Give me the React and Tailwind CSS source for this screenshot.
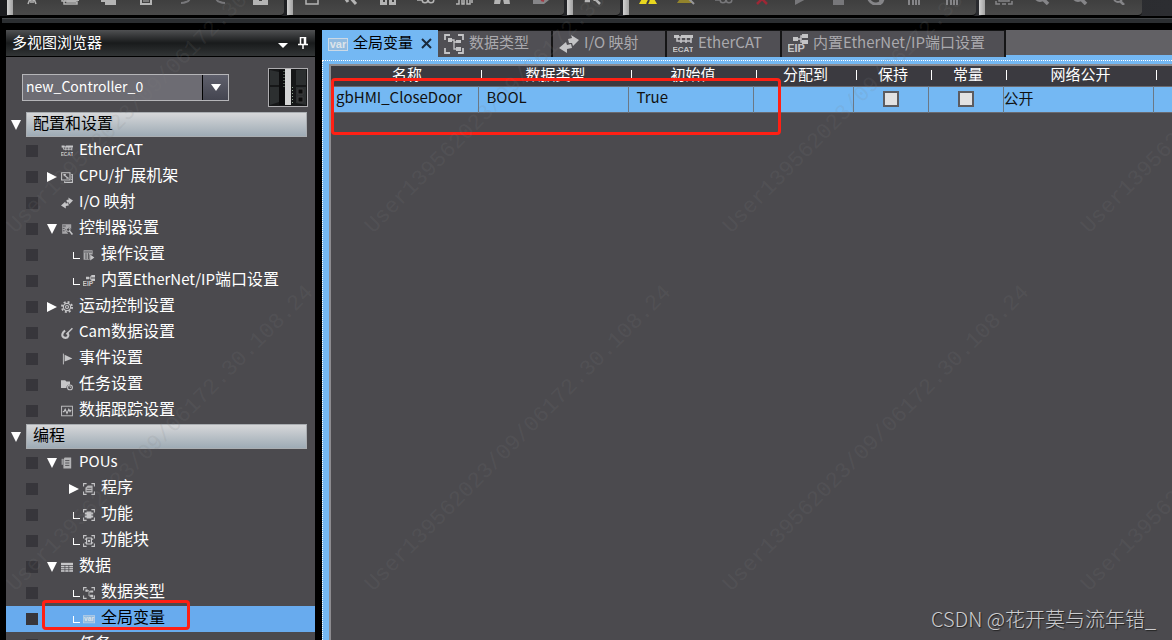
import React, { useState } from "react";

const TOOL_GROUPS = [
  [
    ["剪切", "cut"],
    ["复制", "copy"],
    ["粘贴", "paste"],
    ["删除", "trash"],
    ["撤销", "undo", "text-[#77777a]"],
    ["恢复", "redo", "text-[#77777a]"],
    ["新建", "box"],
  ],
  [
    ["窗口", "frame"],
    ["编译", "tool"],
    ["查找", "panes"],
    ["监视", "glasses"],
    ["波形", "wave"],
    ["交叉引用", "binoculars"],
    ["编辑", "note", "text-[#858588]"],
  ],
  [["设置", "wrench"]],
  [
    ["在线", "warning", "text-[#e9d71f]"],
    ["离线", "warningOff", "text-[#92832c]"],
    ["同步", "glasses", "text-[#77777a]"],
    ["停止监视", "cross", "text-[#9c2735]"],
    ["运行", "play", "text-[#77777a]"],
    ["停止", "stop", "text-[#77777a]"],
    ["复位", "reset", "text-[#858588]"],
    ["状态", "bars", "text-[#858588]"],
    ["统计", "bars", "text-[#858588]"],
  ],
  [
    ["适合窗口", "fit", "text-[#858588]"],
    ["放大", "zoom", "text-[#858588]"],
    ["缩小", "zoom", "text-[#858588]"],
    ["100%", "zoomSmall", "text-[#858588]"],
  ],
];

const TABS = [
  { label: "全局变量", icon: "var", width: "w-[116px]" },
  { label: "数据类型", icon: "types", width: "w-[115px]" },
  { label: "I/O 映射", icon: "io", width: "w-[114px]" },
  { label: "EtherCAT", icon: "ecat", width: "w-[115px]" },
  { label: "内置EtherNet/IP端口设置", icon: "eip", width: "w-[224px]" },
];

const SECTIONS = [
  {
    title: "配置和设置",
    items: [
      { label: "EtherCAT", icon: "ecat" },
      { label: "CPU/扩展机架", icon: "cpu", state: "closed" },
      { label: "I/O 映射", icon: "io" },
      { label: "控制器设置", icon: "controller", state: "open" },
      { label: "操作设置", icon: "operation", child: true },
      { label: "内置EtherNet/IP端口设置", icon: "eip", child: true },
      { label: "运动控制设置", icon: "gear", state: "closed" },
      { label: "Cam数据设置", icon: "cam" },
      { label: "事件设置", icon: "flag" },
      { label: "任务设置", icon: "task" },
      { label: "数据跟踪设置", icon: "trace" },
    ],
  },
  {
    title: "编程",
    items: [
      { label: "POUs", icon: "pou", state: "open" },
      { label: "程序", icon: "program", child: true, state: "closed" },
      { label: "功能", icon: "func", child: true },
      { label: "功能块", icon: "block", child: true },
      { label: "数据", icon: "table", state: "open" },
      { label: "数据类型", icon: "types", child: true },
      { label: "全局变量", icon: "var", child: true, marked: true },
      { label: "任务", icon: "task", state: "closed" },
    ],
  },
];

const COLUMNS = [
  { label: "名称", width: "w-[147px]" },
  { label: "数据类型", width: "w-[150px]" },
  { label: "初始值", width: "w-[125px]" },
  { label: "分配到", width: "w-[100px]" },
  { label: "保持", width: "w-[75px]" },
  { label: "常量", width: "w-[75px]" },
  { label: "网络公开", width: "w-[150px]" },
];

const line = { fill: "none", stroke: "currentColor", strokeWidth: 2 };

const TOOL_ICONS = {
  cut: (
    <>
      <path d="M5 0l6 13M13 0L7 13" {...line} />
      <path d="M7 12l-2 5M11 12l2 5M8 13v3M10 13v3" {...line} strokeWidth="1.500" />
    </>
  ),
  copy: (
    <>
      <path d="M7 1h10v12H7z" {...line} />
      <path d="M1 12v2h2v3h13v-2H6v-3M4 12v2h11" {...line} strokeWidth="1.500" />
    </>
  ),
  paste: <path d="M2 2h10v6h5v10H6v-3H2v-2h4v-2H2z" fill="currentColor" />,
  trash: (
    <>
      <path d="M2 3h14M7 1h4M4 6h10v11H4z" {...line} />
      <path d="M7 8v7M9 8v7M11 8v7" {...line} strokeWidth="1" />
    </>
  ),
  undo: <path d="M4 5h6c7 0 6 9 1 10-2 1-3 1-5 1M8 1L4 5l4 4" {...line} />,
  redo: <path d="M14 5H8C1 5 2 14 7 15c2 1 3 1 5 1M10 1l4 4-4 4" {...line} />,
  box: <path d="M2 4h15v14H2zM8 12v2h3v-2z" fill="currentColor" fillRule="evenodd" />,
  frame: <path d="M3 4h12v13H3z" {...line} strokeWidth="1.500" />,
  tool: <path d="M2 8l5 7M7 8l8 9" {...line} strokeWidth="3" />,
  panes: <path d="M1 4h7v14H1zM10 4h7v14h-7zM4 13h2v2H4zM13 13h2v2h-2z" fill="currentColor" fillRule="evenodd" />,
  glasses: (
    <>
      <circle cx="8" cy="13" r="2.800" {...line} strokeWidth="1.500" />
      <circle cx="14" cy="13" r="2.800" {...line} strokeWidth="1.500" />
      <path d="M0 13h5M4 13l3-8" {...line} strokeWidth="1.500" />
    </>
  ),
  wave: <path d="M1 17h3V9h3v8h2V9h3v8h3V9h2v7" {...line} strokeWidth="1.500" />,
  binoculars: <path d="M3 3h5v7h2V3h5l2 14h-6l-1-5H8l-1 5H1z" fill="currentColor" />,
  note: (
    <>
      <path d="M2 4h12v9h4l-5 4H2z" fill="currentColor" />
      <path d="M10 13l3 1" stroke="#a03a44" strokeWidth="2" />
    </>
  ),
  wrench: <path d="M4 6l-1 8h4M8 8l9 9M10 13l3-3" {...line} strokeWidth="2.500" />,
  warning: (
    <>
      <path d="M9 1l9 16H0z" fill="currentColor" />
      <path d="M9 6v6M10 13l-2 4" stroke="#3c3c3c" strokeWidth="2" />
    </>
  ),
  warningOff: (
    <>
      <path d="M9 3l7 13H0z" fill="currentColor" />
      <path d="M8 8l9 9" stroke="#97979a" strokeWidth="2" />
    </>
  ),
  cross: <path d="M3 5l6 7-5 5M15 5l-6 7 5 5" {...line} strokeWidth="2.500" />,
  play: <path d="M4 5l13 6-13 7z" fill="currentColor" />,
  stop: <path d="M4 6h11v12H4z" fill="currentColor" />,
  reset: <path d="M9 3a7 7 0 1 0 6 10M8 17a6 6 0 0 0 8-5l-4 1" {...line} strokeWidth="3" />,
  bars: <path d="M4 6v12M8 10v8M11 10v8M14 6v12" {...line} />,
  fit: <path d="M1 14v3h4M17 14v3h-4M4 6h10v8H4zM7 17h4" {...line} strokeWidth="1.500" />,
  zoom: (
    <>
      <circle cx="7" cy="9" r="5" {...line} />
      <path d="M10 12l5 5" {...line} strokeWidth="3.500" />
    </>
  ),
  zoomSmall: (
    <>
      <circle cx="9" cy="11" r="4" {...line} />
      <path d="M11 14l4 4" {...line} strokeWidth="2.500" />
    </>
  ),
};

const corners = "M1 6V1h5M14 1h5v5M19 14v5h-5M6 19H1v-5";

const GLYPHS = {
  var: (
    <>
      <rect x="0.5" y="4.5" width="19" height="12" fill="#92bbe0" stroke="#cbd9e6" />
      <text x="10" y="14" textAnchor="middle" fontSize="11" fontWeight="bold" fill="#dde4ea" fontFamily="Liberation Sans, sans-serif">
        var
      </text>
    </>
  ),
  types: (
    <>
      <path d={corners} fill="none" stroke="currentColor" strokeWidth="1.800" />
      <path d="M4 4h4v4H4zM12 6h5v3h-5zM12 13h5v4h-5z" fill="currentColor" />
      <path d="M8 6h2v9h3M10 8h3" fill="none" stroke="currentColor" strokeWidth="1.300" />
    </>
  ),
  io: (
    <path
      d="M12 1l8 5-6 6-1-3h-3l-1-4 4-1zM7 8l1 3 4-1 1 4-5 1v4l-8-5z"
      fill="currentColor"
    />
  ),
  ecat: (
    <>
      <path d="M1 1h5v3H1zM8 1h12v3H8z" fill="currentColor" />
      <path d="M2 3h15M4 4v3h14V4M8 3v6M13 3v6M18 6v3" fill="none" stroke="currentColor" strokeWidth="1.500" />
      <text x="10" y="18" textAnchor="middle" fontSize="8" fontWeight="bold" fill="currentColor" fontFamily="Liberation Sans, sans-serif">
        ECAT
      </text>
    </>
  ),
  eip: (
    <>
      <path d="M5 3h5v4H5zM14 0h6v4h-6zM14 6h6v4h-6z" fill="currentColor" />
      <path d="M10 5h3M15 2h-2v6h2" fill="none" stroke="currentColor" strokeWidth="1.500" />
      <text x="8" y="18" textAnchor="middle" fontSize="11" fontWeight="bold" fill="currentColor" fontFamily="Liberation Sans, sans-serif">
        EIP
      </text>
    </>
  ),
  cpu: (
    <>
      <path d="M1 3h14v12H1zM17 6h2v13H6v-2M17 10h2M17 14h2" fill="none" stroke="currentColor" strokeWidth="1.800" />
      <path d="M4 6l8 6M4 6h4M9 12h4" fill="none" stroke="currentColor" strokeWidth="2" />
    </>
  ),
  controller: (
    <>
      <path d="M2 2h15v8l-4-3-6 4 5 7H2z" fill="currentColor" opacity=".75" />
      <path d="M3 5h5M3 9h3M3 13h3" stroke="#4b4a4e" strokeWidth="1.500" />
      <circle cx="12" cy="11" r="3" fill="none" stroke="currentColor" strokeWidth="1.500" />
      <path d="M14 13l5 6" stroke="currentColor" strokeWidth="2.500" />
    </>
  ),
  operation: (
    <>
      <path d="M1 2h15v7h-5v9H1z" fill="currentColor" opacity=".8" />
      <path d="M2 5h13M5 7v10M9 7v10" stroke="#4b4a4e" strokeWidth="1.500" />
      <path d="M12 9l7 5-7 5z" fill="currentColor" />
    </>
  ),
  gear: (
    <>
      <circle cx="10" cy="10" r="8.500" fill="none" stroke="currentColor" strokeWidth="3" strokeDasharray="3.300 3.376" />
      <circle cx="10" cy="10" r="6" fill="none" stroke="currentColor" strokeWidth="2" />
      <circle cx="10" cy="10" r="2.500" fill="none" stroke="currentColor" strokeWidth="2" />
    </>
  ),
  cam: (
    <>
      <path d="M9 12L19 2" stroke="currentColor" strokeWidth="2.500" />
      <path d="M7 6c-4 2-6 7-4 10s8 3 9-1c.5-2-.5-4-2-4.500" fill="none" stroke="currentColor" strokeWidth="3.500" />
    </>
  ),
  flag: (
    <>
      <path d="M4 1v18" stroke="currentColor" strokeWidth="1.500" />
      <path d="M6 3l13 6-13 5z" fill="currentColor" />
    </>
  ),
  task: (
    <>
      <path d="M0 2h7l2 2h6v5a6 6 0 0 0-6 6H0z" fill="currentColor" />
      <circle cx="15" cy="14" r="4" fill="none" stroke="currentColor" strokeWidth="1.800" />
      <path d="M15 11.500V14h2" fill="none" stroke="currentColor" strokeWidth="1.300" />
    </>
  ),
  trace: (
    <>
      <rect x="1" y="2" width="18" height="16" fill="none" stroke="currentColor" strokeWidth="1.500" />
      <path d="M3 11h2l2-4 3 7 3-7 2 4 2-3" fill="none" stroke="currentColor" strokeWidth="1.800" />
    </>
  ),
  pou: (
    <>
      <path d="M6 1h11v18H4V4z" fill="currentColor" opacity=".85" />
      <path d="M7 6h7M7 10h7M7 14h7" stroke="#4b4a4e" strokeWidth="1.500" />
      <path d="M2 3v10" stroke="currentColor" strokeWidth="1.500" />
    </>
  ),
  program: (
    <>
      <path d={corners} fill="none" stroke="currentColor" strokeWidth="1.800" />
      <path d="M8 4h8v12H4V8z" fill="currentColor" opacity=".85" />
      <path d="M7 9h7M6 12.500h8" stroke="#4b4a4e" strokeWidth="1.200" />
    </>
  ),
  func: (
    <>
      <path d={corners} fill="none" stroke="currentColor" strokeWidth="1.800" />
      <path d="M6 4h8v2h3v3h-3v2h3v3h-3v2H6v-2H3v-3h3V9H3V6h3z" fill="currentColor" />
    </>
  ),
  block: (
    <>
      <path d={corners} fill="none" stroke="currentColor" strokeWidth="1.800" />
      <path d="M6 5h8v10H6zM3 7h3M3 13h3M14 7h3M14 13h3" fill="none" stroke="currentColor" strokeWidth="2" />
      <circle cx="10" cy="10" r="2" fill="currentColor" />
    </>
  ),
  table: (
    <>
      <path d="M0 3h20v15H0z" fill="currentColor" />
      <path d="M0 7.500h20M0 11h20M0 14.500h20M6.500 7v11M13 7v11" stroke="#4b4a4e" strokeWidth="1.200" />
    </>
  ),
};

function Glyph({ name, className }) {
  return (
    <svg viewBox="0 0 20 20" className={`shrink-0 ${className}`} aria-hidden="true">
      {GLYPHS[name]}
    </svg>
  );
}

function Triangle({ open }) {
  return (
    <svg viewBox="0 0 10 10" className="size-[10px] text-white" aria-hidden="true">
      <path d={open ? "M0 0h10L5 10z" : "M0 0l10 5-10 5z"} fill="currentColor" />
    </svg>
  );
}

function Toolbar() {
  return (
    <header className="bg-black pb-[7px]">
      <div className="flex gap-[3px] pl-[7px] h-4 overflow-hidden bg-gradient-to-r from-[#1b1c1f] to-[#2c2d31]">
        {TOOL_GROUPS.map((group, i) => (
          <div
            key={i}
            className="flex shrink-0 pr-[5px] min-w-[53px] rounded-b-sm border-b border-black bg-gradient-to-b from-[#3f3f3f] to-[#494949]"
          >
            <span className="w-[6px] bg-gradient-to-r from-[#d2d2d2] to-[#a2a2a2]" />
            {group.map(([label, icon, color]) => (
              <button key={label} aria-label={label} className="flex w-[38px] h-[5px] items-end justify-center">
                <svg viewBox="0 0 18 18" className={`size-[18px] shrink-0 ${color || "text-[#b4b4b4]"}`}>
                  {TOOL_ICONS[icon]}
                </svg>
              </button>
            ))}
          </div>
        ))}
      </div>
      <div className="mt-[2px] ml-[2px] h-[5px] bg-[#2b2e31] border-t border-[#44474a]" />
    </header>
  );
}

// latin runs are set one size smaller than the Chinese around them
function MixedLabel({ text }) {
  return text.split(/([\x20-\x7e]+)/).map((part, i) =>
    i % 2 ? (
      <span key={i} className="text-[15px]">
        {part}
      </span>
    ) : (
      part
    )
  );
}

function TreeRow({ item, selected, onSelect }) {
  const { label, icon, child, state, marked } = item;
  return (
    <li className={`relative flex items-center h-[26px] pl-5 ${selected ? "bg-[#68abee]" : ""}`}>
      <span className="size-3 shrink-0 bg-[#37363b]" />
      <span className={`flex w-3 shrink-0 items-center justify-center ${child ? "ml-[30px]" : "ml-2"}`}>
        {state && (
          <button aria-label={label} className="block">
            <Triangle open={state === "open"} />
          </button>
        )}
        {child && !state && <span className="ml-1 size-[7px] border-l border-b border-white" />}
      </span>
      <Glyph name={icon} className="ml-[3px] size-3 text-[#c6c6c8]" />
      <button
        onClick={() => onSelect(label)}
        className={`ml-[6px] pb-[6px] text-[16px] leading-5 whitespace-nowrap ${selected ? "text-black" : "text-white"}`}
      >
        <MixedLabel text={label} />
      </button>
      {marked && <span className="absolute left-9 -top-[6px] w-[148px] h-[30px] border-[3px] border-[#ff2014] rounded-sm" />}
    </li>
  );
}

function Rack() {
  return (
    <svg viewBox="0 0 40 39" className="w-10 h-[39px] shrink-0" aria-hidden="true">
      <rect x="0.500" y="0.500" width="39" height="38" fill="#161718" stroke="#aeadb0" />
      <path d="M2 2l9 2v13H2zM2 19h9v15l-9 3zM28 2l10-1v16H28zM28 19h10v18l-10-2z" fill="#2c2f30" />
      <path d="M11 2h6v35h-6z" fill="#0d0d0e" />
      <path d="M17 1h6v36h-6z" fill="#d4d4d4" />
      <path d="M16 3v16M24.500 19v17" stroke="#8ea28e" strokeDasharray="1 2" />
      <path d="M30 21h5v5h-5zM30 29h5v5h-5z" fill="#0b0b0b" stroke="#3c3c3c" />
    </svg>
  );
}

function Explorer() {
  const [selected, setSelected] = useState("全局变量");
  return (
    <aside className="flex flex-col w-[309px] shrink-0 bg-[#4b4a4e] overflow-hidden">
      <div className="flex items-center shrink-0 h-[27px] pl-[6px] pr-[7px] border-b border-black bg-gradient-to-b from-[#505153] via-[#191b1c] to-[#323536] text-white">
        <h2 className="flex-1 pb-[2px] text-[15px] leading-5">多视图浏览器</h2>
        <button aria-label="菜单" className="pt-1">
          <svg viewBox="0 0 10 5" className="w-[10px] h-[5px]">
            <path d="M0 0h10L5 5z" fill="currentColor" />
          </svg>
        </button>
        <button aria-label="固定" className="ml-[10px]">
          <svg viewBox="0 0 10 12" className="w-[10px] h-3" fill="none" stroke="currentColor">
            <path d="M2.500 7V.5h5V7M0 7.500h10M5 8v4M6.500 1v6" strokeWidth="1.500" />
          </svg>
        </button>
      </div>
      <div className="flex items-center justify-between shrink-0 pt-[11px] pb-[5px] pl-4 pr-[7px]">
        <div className="relative w-[207px]">
          <select
            aria-label="控制器"
            className="block w-full h-[27px] pl-[3px] pb-[2px] appearance-none border border-[#b5b5b8] bg-[#6d6c73] text-[14px] text-white"
          >
            <option>new_Controller_0</option>
          </select>
          <span className="absolute right-px inset-y-px flex w-[26px] items-center justify-center border-l border-black bg-gradient-to-b from-[#5f606c] to-[#444550] pointer-events-none">
            <svg viewBox="0 0 10 7" className="w-[10px] h-[7px]">
              <path d="M0 0h10L5 7z" fill="#fff" />
            </svg>
          </span>
        </div>
        <Rack />
      </div>
      {SECTIONS.map((section) => (
        <section key={section.title}>
          <div className="flex h-[26px] pl-[5px] pr-2 items-center">
            <button aria-label={section.title} className="w-[15px]">
              <Triangle open />
            </button>
            <h3 className="flex-1 h-[25px] pl-[6px] mb-px border border-[#a9adb1] bg-gradient-to-b from-[#d6d7d9] to-[#9eabb5] text-[16px] leading-[18px] text-black">
              {section.title}
            </h3>
          </div>
          <ul>
            {section.items.map((item) => (
              <TreeRow key={item.label} item={item} selected={selected === item.label} onSelect={setSelected} />
            ))}
          </ul>
        </section>
      ))}
    </aside>
  );
}

function TabStrip() {
  return (
    <div className="flex h-[27px] bg-[#74b8f3] text-[15px] leading-5">
      {TABS.map((tab, i) => (
        <div
          key={tab.label}
          className={`flex items-center shrink-0 pl-[6px] ${tab.width} ${
            i === 0 ? "text-black" : "border-r-2 border-t border-[#151516] bg-[#504f54] text-[#aaa9ad]"
          }`}
        >
          <Glyph name={tab.icon} className={`size-5 ${i === 0 ? "" : "text-[#c4c4c6]"}`} />
          <button className="ml-[5px] pb-1 whitespace-nowrap">{tab.label}</button>
          {i === 0 && (
            <button aria-label="关闭" className="ml-2">
              <svg viewBox="0 0 11 11" className="size-[11px]">
                <path d="M1 1l9 9M10 1l-9 9" stroke="#1a2a3c" strokeWidth="2" />
              </svg>
            </button>
          )}
        </div>
      ))}
      <div className="flex-1 h-[25px] bg-[#626165]" />
    </div>
  );
}

function CheckCell({ label }) {
  return (
    <td className="border-r border-[#6b7885]">
      <input
        type="checkbox"
        aria-label={label}
        className="block mx-auto size-4 appearance-none border-2 border-[#5c5c60] bg-[#e2e2e2] checked:bg-[#3b3a40]"
      />
    </td>
  );
}

function VariableTable() {
  return (
    <div className="relative flex-1 border-l-2 border-t-2 border-[#8d8c90] bg-[#4b4a4e]">
      <table className="w-full table-fixed border-collapse text-[15px] leading-5">
        <thead>
          <tr className="h-[20px] bg-[#3b3a40] text-white">
            {COLUMNS.map((col) => (
              <th key={col.label} className={`relative p-0 font-normal ${col.width}`}>
                <span className="block h-[18px] pl-[5px] leading-[13px]">{col.label}</span>
                <span className="absolute -right-1 top-1 w-px h-[10px] bg-white" />
              </th>
            ))}
            <th className="p-0" aria-label="注释" />
          </tr>
        </thead>
        <tbody>
          <tr className="h-[26px] border-y border-[#6b6a6f] bg-[#74b8f3] text-[#111]">
            <td className="p-0 pl-[5px] pb-1 border-r border-[#6b7885]">gbHMI_CloseDoor</td>
            <td className="p-0 pl-2 pb-1 border-r border-[#6b7885]">BOOL</td>
            <td className="p-0 pl-2 pb-1 border-r border-[#6b7885]">True</td>
            <td className="p-0 border-r border-[#6b7885]" />
            <CheckCell label="保持" />
            <CheckCell label="常量" />
            <td className="p-0 pb-[2px] border-r border-[#6b7885]">公开</td>
            <td className="p-0" />
          </tr>
        </tbody>
      </table>
      <span className="absolute left-0 top-3 w-[450px] h-[57px] border-[3px] border-[#ff2014] rounded-sm" />
    </div>
  );
}

const STAMPS = [232, 590].flatMap((y) => [12, 370, 728, 1086].map((x) => ({ x, y })));

function Watermark() {
  return (
    <svg className="absolute inset-0 size-full pointer-events-none" aria-hidden="true">
      {STAMPS.map(({ x, y }) => (
        <text
          key={`${x}-${y}`}
          transform={`translate(${x + 3} ${y + 2}) rotate(-45)`}
          fontSize="22"
          fontFamily="Liberation Mono, monospace"
          fill="#808080"
          fillOpacity="0.15"
        >
          User139562023/09/06172.30.108.24
        </text>
      ))}
    </svg>
  );
}

function App() {
  return (
    <div className="relative flex flex-col h-screen overflow-hidden bg-black font-['Noto_Sans_CJK_SC',sans-serif]">
      <Toolbar />
      <div className="flex flex-1 min-h-0 pl-[6px] gap-[7px]">
        <Explorer />
        <main className="flex flex-col flex-1 min-w-0 bg-[#74b8f3]">
          <TabStrip />
          <div className="flex flex-col flex-1 mt-[3px] pt-[3px] pl-[6px] border-l border-t border-dotted border-white">
            <VariableTable />
          </div>
        </main>
      </div>
      <Watermark />
      <p className="absolute right-4 bottom-[6px] text-[20px] leading-[30px] font-light text-[#cdcdcf] [text-shadow:1px_1px_1px_#222]">
        CSDN @花开莫与流年错_
      </p>
    </div>
  );
}

export default App;
